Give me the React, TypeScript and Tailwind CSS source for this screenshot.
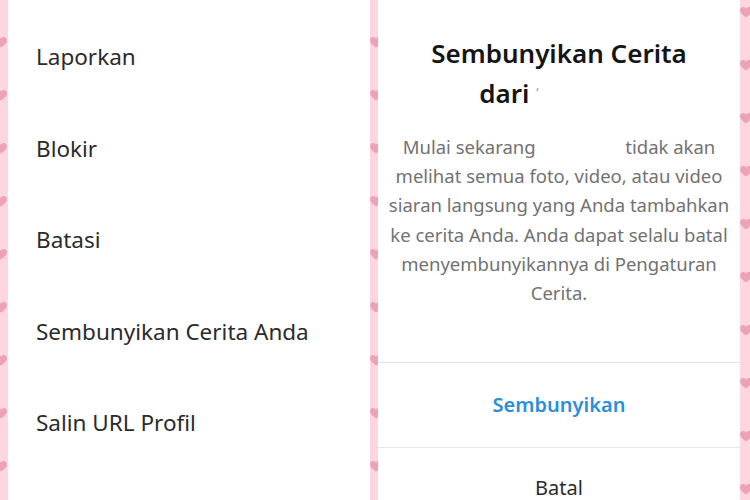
import React from "react";

const Heart = () => (
    <svg width="12" height="11" viewBox="0 0 12 11" className="shrink-0">
        <path d="M6 10.5 C2 7.5 0 5.5 0 3.2 C0 1.4 1.4 0 3.1 0 C4.3 0 5.4 0.7 6 1.7 C6.6 0.7 7.7 0 8.9 0 C10.6 0 12 1.4 12 3.2 C12 5.5 10 7.5 6 10.5 Z" fill="#eca3b7" />
    </svg>
);

const Strip = ({ width, offset, shift }: { width: string; offset: string; shift: string }) => (
    <div className={`${width} h-full bg-[#fdd6df] overflow-hidden shrink-0`}>
        <div className={`flex flex-col gap-[42px] ${offset} ${shift}`}>
            {Array.from({ length: 10 }).map((_, i) => (
                <Heart key={i} />
            ))}
        </div>
    </div>
);

const menuItems = ["Laporkan", "Blokir", "Batasi", "Sembunyikan Cerita Anda", "Salin URL Profil"];

export default function App() {
    return (
        <div className="w-[750px] h-[500px] flex overflow-hidden bg-[#fdd6df] font-['Noto_Sans',sans-serif]">
            <Strip width="w-[8px]" offset="pt-[37px]" shift="-ml-[5px]" />

            <section className="w-[362px] h-full bg-white shrink-0 pt-[11.5px] px-[28px]">
                {menuItems.map((item) => (
                    <div key={item} className="h-[91.5px] flex items-center text-[22.5px] text-[#2b2b2b]">
                        {item}
                    </div>
                ))}
            </section>

            <Strip width="w-[8px]" offset="pt-[37px]" shift="ml-0" />

            <section className="w-[362px] h-full bg-white shrink-0 flex flex-col">
                <div className="pt-[33px] text-center text-[26px] leading-[40px] font-semibold text-[#151515]">
                    <div>Sembunyikan Cerita</div>
                    <div>
                        dari <span className="text-[#bbbbbb] text-[14px] align-top">’</span>
                        <span className="inline-block w-[100px]" />
                    </div>
                </div>

                <div className="mt-[19px] text-center text-[18.5px] leading-[29.2px] text-[#727272] whitespace-nowrap">
                    <div>
                        Mulai sekarang <span className="inline-block w-[80px]" /> tidak akan
                    </div>
                    <div>melihat semua foto, video, atau video</div>
                    <div>siaran langsung yang Anda tambahkan</div>
                    <div>ke cerita Anda. Anda dapat selalu batal</div>
                    <div>menyembunyikannya di Pengaturan</div>
                    <div>Cerita.</div>
                </div>

                <div className="mt-auto border-t border-[#e6e6e6] h-[85px] shrink-0 flex items-center justify-center text-[20px] font-semibold text-[#2b8fd6]">
                    Sembunyikan
                </div>
                <div className="border-t border-[#e6e6e6] h-[53px] shrink-0 flex items-start justify-center pt-[30px] text-[20px] text-[#2b2b2b]">
                    <span className="leading-[20px]">Batal</span>
                </div>
            </section>

            <Strip width="w-[10px]" offset="pt-[7px]" shift="ml-0" />
        </div>
    );
}
